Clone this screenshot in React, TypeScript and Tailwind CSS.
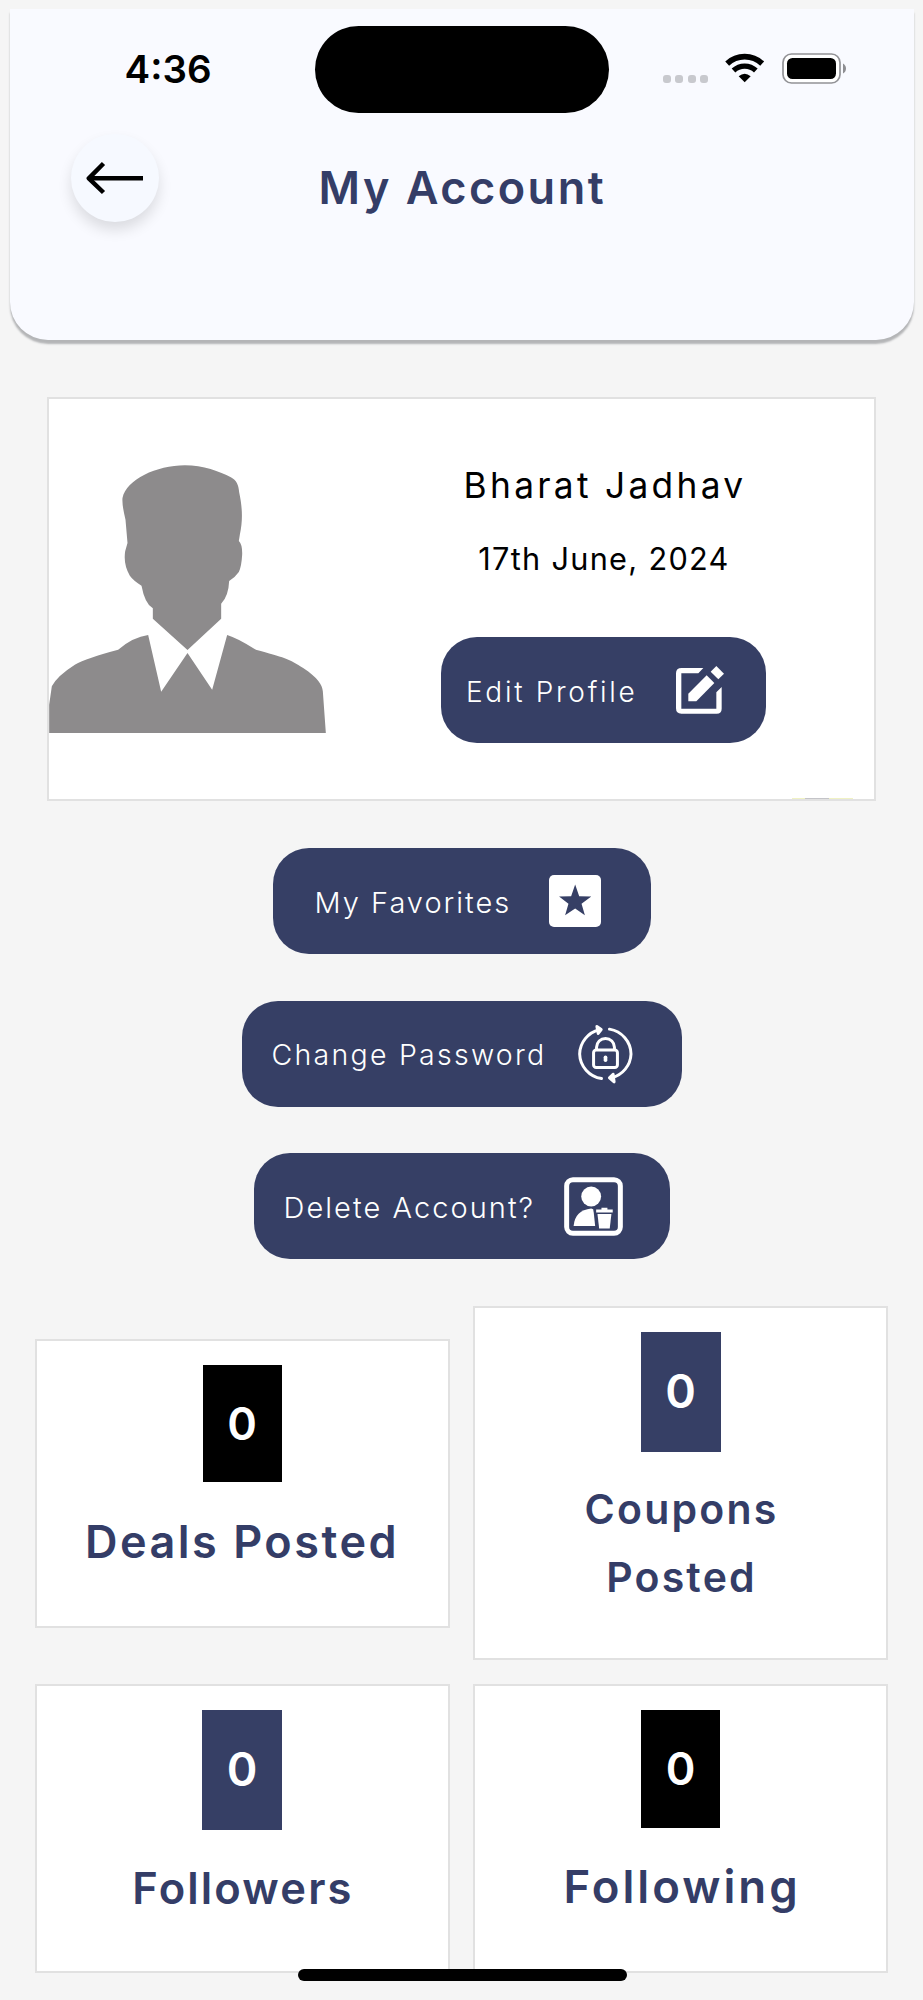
import type { ReactNode } from "react";

function WifiIcon() {
  return (
    <svg viewBox="816 160 120 90" className="w-10 h-[30px]" fill="none" stroke="#000">
      <path d="M822.5 191.7A77 77 0 0 1 927.5 191.7" strokeWidth="17" />
      <path d="M841.5 212.5A49 49 0 0 1 908.5 212.5" strokeWidth="16" />
      <path d="M875 248L857 230Q875 215 893 230Z" fill="#000" stroke="none" />
    </svg>
  );
}

function BatteryIcon() {
  return (
    <svg viewBox="0 0 65 31" className="w-[65px] h-[31px]">
      <rect x="1" y="1" width="57" height="29" rx="8.5" fill="#fff" stroke="#929296" strokeWidth="1.7" />
      <rect x="5" y="5" width="49" height="21" rx="5.5" fill="#000" />
      <path d="M61 10.5C65 12.5 65 18.5 61 20.5Z" fill="#8e8e92" />
    </svg>
  );
}

function ArrowIcon() {
  return (
    <svg viewBox="0 0 58 34" className="w-[58px] h-[34px]" fill="none" stroke="#000" strokeWidth="4.5">
      <path d="M57 17.3H3" />
      <path d="M17.5 2.5L2.8 17.3L17.5 31.5" strokeLinejoin="round" />
    </svg>
  );
}

function AvatarIcon() {
  return (
    <svg viewBox="58 256 830 804" className="w-[277px] h-[268px]" fill="#8d8b8c">
      <path d="M278 355C290 300 380 257 465 257C520 257 570 276 603 293C620 302 626 315 628 338C637 380 640 420 630 465L627 484Q638 495 637 525Q635 560 627 577Q615 594 598 604Q596 650 574 672V717L473 811L369 717V686Q345 672 335 618Q310 602 300 588Q280 555 286 515L293 490L287 420Q276 375 278 355Z" />
      <path d="M58 1060V975L66 920Q80 890 135 855Q170 835 265 810Q310 772 355 766L394 936L473 820L547 930L592 766Q620 774 678 810C760 832 780 838 820 865C865 895 877 915 879 935L888 1060Z" />
    </svg>
  );
}

function EditIcon() {
  return (
    <svg viewBox="768 858 144 144" className="w-12 h-12" fill="#fff">
      <path d="M785 864H850L835 880H784V986H889V937L905 921V986Q905 1001 890 1001H784Q768 1001 768 985V880Q768 864 785 864Z" />
      <path d="M805 941L860 886L883 909L829 964H805Z" />
      <path d="M872 875L889 858L912 881L895 898Z" />
    </svg>
  );
}

function StarIcon() {
  return (
    <svg viewBox="955 136 155 155" className="w-[52px] h-[52px]">
      <rect x="955" y="136" width="155" height="155" rx="15" fill="#fff" />
      <path
        d="M1033 164L1045 199L1081 200L1052 222L1062 256L1033 236L1003 256L1013 222L985 200L1021 199Z"
        fill="#363f65"
      />
    </svg>
  );
}

function PasswordIcon() {
  return (
    <svg
      viewBox="1044 581 166 180"
      className="w-[55px] h-[60px]"
      fill="none"
      stroke="#fff"
      strokeWidth="9"
      strokeLinecap="round"
      strokeLinejoin="round"
    >
      <path d="M1115 745A78 77 0 0 1 1049 671A78 77 0 0 1 1108 598" />
      <path d="M1139 596A78 77 0 0 1 1204 671A78 77 0 0 1 1145 743" />
      <path d="M1101 588L1114 597L1105 609Z" fill="#fff" />
      <path d="M1150 732L1139 743L1153 755Z" fill="#fff" />
      <rect x="1091" y="659" width="72" height="53" rx="8" />
      <path d="M1100 656V651A27 27 0 0 1 1154 651V656" />
      <path d="M1127 681V690" strokeWidth="11" />
    </svg>
  );
}

function DeleteIcon() {
  return (
    <svg viewBox="1000 1040 178 178" className="w-[59px] h-[59px]" fill="#fff">
      <rect x="1008" y="1048" width="162" height="162" rx="19" fill="none" stroke="#fff" strokeWidth="15" />
      <circle cx="1082" cy="1099" r="30" />
      <path d="M1029 1188Q1033 1140 1082 1135L1088 1137L1090 1149L1094 1188Z" />
      <path d="M1097 1138H1113V1133H1131V1138H1147V1147H1097Z" />
      <path d="M1101 1152H1143L1138 1195H1106Z" />
    </svg>
  );
}

interface ActionButtonProps {
  label: string;
  icon: ReactNode;
  className: string;
  textClass: string;
}

function ActionButton({ label, icon, className, textClass }: ActionButtonProps) {
  return (
    <button
      className={`flex h-[106px] items-center rounded-[36px] bg-[#363f65] text-left font-light text-white ${className}`}
    >
      <span className={`shrink-0 whitespace-nowrap ${textClass}`}>{label}</span>
      {icon}
    </button>
  );
}

interface StatCardProps {
  count: number;
  label: string;
  className: string;
  countClass: string;
  labelClass: string;
}

function StatCard({ count, label, className, countClass, labelClass }: StatCardProps) {
  return (
    <div className={`flex w-[415px] flex-col items-center border-2 border-[#e1e1e1] bg-white ${className}`}>
      <div className={`flex shrink-0 items-center justify-center font-semibold text-white ${countClass}`}>{count}</div>
      <div className={`text-center font-semibold text-[#343d67] ${labelClass}`}>{label}</div>
    </div>
  );
}

export default function App() {
  return (
    <div className="relative h-[2000px] w-[923px] overflow-hidden bg-[#f5f5f5] pt-[9px] font-['Inter',sans-serif]">
      <header className="mx-[9.5px] h-[331px] rounded-b-[38px] bg-[#f9faff] shadow-[0_4px_2px_#b4b5b7]">
        <div className="flex h-[104px] pt-[17px]">
          <div className="w-[305px] pt-[10px] pl-[115px] text-[38.5px] leading-[66px] font-semibold">4:36</div>
          <div className="h-[87px] w-[294px] rounded-full bg-black" />
          <div className="ml-[54px] flex gap-[4.6px] pt-[49px]">
            <span className="h-2 w-2 rounded-[3px] bg-[#c8c9ce]" />
            <span className="h-2 w-2 rounded-[3px] bg-[#c8c9ce]" />
            <span className="h-2 w-2 rounded-[3px] bg-[#c8c9ce]" />
            <span className="h-2 w-2 rounded-[3px] bg-[#c8c9ce]" />
          </div>
          <div className="ml-[17px] pt-[27px]">
            <WifiIcon />
          </div>
          <div className="ml-[17px] pt-[27px]">
            <BatteryIcon />
          </div>
        </div>
        <div className="flex pt-[21px] pl-[61.5px]">
          <button className="flex h-[88px] w-[88px] items-center justify-center rounded-full bg-[#f6f9ff] shadow-[0_8px_14px_rgba(0,0,0,0.12)]">
            <ArrowIcon />
          </button>
          <h1 className="mt-[24px] ml-[159.5px] text-[45px] leading-[60px] font-semibold tracking-[2.5px] whitespace-nowrap text-[#343d67]">
            My Account
          </h1>
        </div>
      </header>

      <section className="relative mt-[57px] ml-[47px] flex h-[404px] w-[829px] border-2 border-[#e1e1e1] bg-white">
        <div className="w-[277px] shrink-0 pt-[66px]">
          <AvatarIcon />
        </div>
        <div className="ml-[115px] flex w-[325px] flex-col items-center">
          <div className="mt-[67px] pl-[3px] text-[35.3px] leading-[40px] tracking-[3.3px] whitespace-nowrap">
            Bharat Jadhav
          </div>
          <div className="mt-[33px] pl-px text-[30.7px] leading-[40px] tracking-[1.3px] whitespace-nowrap">
            17th June, 2024
          </div>
          <ActionButton
            label="Edit Profile"
            icon={<EditIcon />}
            className="mt-[58px] w-[325px] pl-[25px]"
            textClass="w-[210px] pt-1 text-[28px] tracking-[2.7px]"
          />
        </div>
        <div className="absolute right-[21px] bottom-0 flex h-px w-[61px] justify-center bg-[#f0f2c4]">
          <div className="-ml-3 h-px w-6 bg-[#c4c4c8]" />
        </div>
      </section>

      <div className="mt-[47px] flex flex-col items-center gap-[46.5px]">
        <ActionButton
          label="My Favorites"
          icon={<StarIcon />}
          className="w-[378px] pl-[42px]"
          textClass="w-[234px] pt-[3px] text-[29px] tracking-[2px]"
        />
        <ActionButton
          label="Change Password"
          icon={<PasswordIcon />}
          className="w-[440px] pl-[30px]"
          textClass="w-[306px] pt-[3px] text-[28.5px] tracking-[2.25px]"
        />
        <ActionButton
          label="Delete Account?"
          icon={<DeleteIcon />}
          className="w-[416px] pl-[30px]"
          textClass="w-[280px] pt-[3px] text-[29px] tracking-[2.05px]"
        />
      </div>

      <div className="mt-[47px] ml-[34.5px] grid grid-cols-[415px_415px] items-center gap-x-[23.5px] gap-y-6">
        <StatCard
          count={0}
          label="Deals Posted"
          className="h-[289px]"
          countClass="mt-6 h-[117.5px] w-[79px] bg-black text-[45px]"
          labelClass="mt-[30px] text-[45px] leading-[60px] tracking-[2.5px]"
        />
        <StatCard
          count={0}
          label="Coupons Posted"
          className="h-[354px]"
          countClass="mt-[23.5px] h-[120px] w-[80px] bg-[#363f65] text-[46.5px]"
          labelClass="mt-[23px] w-[220px] pl-0.5 text-[41px] leading-[68px] tracking-[2.2px]"
        />
        <StatCard
          count={0}
          label="Followers"
          className="h-[289px]"
          countClass="mt-[23.5px] h-[120px] w-[80px] bg-[#363f65] text-[46.5px]"
          labelClass="mt-[28.5px] pl-0.5 text-[43.5px] leading-[60px] tracking-[2.15px]"
        />
        <StatCard
          count={0}
          label="Following"
          className="h-[289px]"
          countClass="mt-[23.5px] h-[118px] w-[79px] bg-black text-[45px]"
          labelClass="mt-[29.5px] pl-[3px] text-[45.5px] leading-[60px] tracking-[3px]"
        />
      </div>

      {/* home indicator */}
      <div className="absolute top-[1969px] left-[297.5px] h-3 w-[329px] rounded-full bg-black" />
    </div>
  );
}
